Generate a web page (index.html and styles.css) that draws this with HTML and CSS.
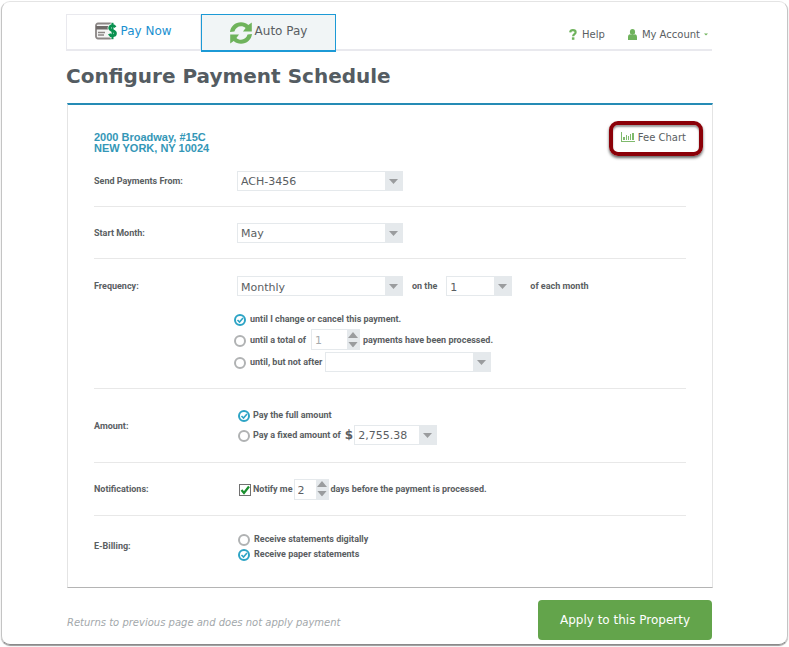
FILE: index.html
```html
<!DOCTYPE html>
<html lang="en">
<head>
  <meta charset="UTF-8">
  <meta name="viewport" content="width=device-width, initial-scale=1.0">
  <title>Configure Payment Schedule</title>
  <link rel="stylesheet" href="styles.css">
</head>
<body>
  <div class="page">
    <header class="topbar">
      <nav class="tabs">
        <a href="#" class="tab">
          <svg width="22" height="18" viewBox="0 0 22 18">
            <rect x="1" y="1.5" width="16" height="15" rx="2" fill="#f4f4f4" stroke="#8b8685" stroke-width="1.8"/>
            <rect x="1" y="4" width="15" height="3.5" fill="#6f6a69"/>
            <path d="M3 10.5h7M3 13h6" stroke="#8b8685" stroke-width="1.3"/>
            <path d="M20.3 5.200C19.500 3.900 18.600 3.600 17.500 3.600c-1.700 0-2.900.9-2.900 2.300 0 3.400 5.900 2 5.900 5.400 0 1.500-1.300 2.500-3.100 2.500-1.500 0-2.600-.6-3.200-1.900M17.500 1.300v15.200" fill="none" stroke="#fff" stroke-width="4"/>
            <path d="M20.3 5.200C19.500 3.900 18.600 3.600 17.500 3.600c-1.700 0-2.900.9-2.900 2.300 0 3.400 5.900 2 5.900 5.400 0 1.500-1.300 2.500-3.100 2.500-1.500 0-2.600-.6-3.200-1.900" fill="none" stroke="#0a9150" stroke-width="2.700"/>
            <path d="M17.500 .8v16.400" stroke="#0a9150" stroke-width="2"/>
          </svg>
          Pay Now
        </a>
        <a href="#" class="tab active">
          <svg width="22" height="22" viewBox="0 0 22 22" fill="#6fb35c">
            <path d="M0 10C.6 4.300 5.200.2 11 .2c2.900 0 5.300 1 7.300 2.700L21.800.6V9.500H13L15.600 6C14.300 4.800 12.800 4.200 11 4.200c-3.100 0-5.600 2-6.600 5.200z"/>
            <path d="M22 12c-.6 5.700-5.200 9.800-11 9.800-2.900 0-5.300-1-7.300-2.700L.2 21.400V12.500H9L6.400 16c1.300 1.200 2.800 1.800 4.600 1.800 3.100 0 5.600-2 6.600-5.200z"/>
          </svg>
          Auto Pay
        </a>
      </nav>
      <div class="links">
        <a href="#" class="link">
          <svg width="8" height="11" viewBox="0 0 8 11">
            <path d="M1.200 3.400C1.400 1.800 2.400 1.200 3.900 1.200c1.600 0 2.700.7 2.700 2 0 1.900-2.500 1.800-2.500 4" fill="none" stroke="#6fb35c" stroke-width="2.200"/>
            <rect x="2.900" y="8.300" width="2.500" height="2.500" fill="#6fb35c"/>
          </svg>
          Help
        </a>
        <a href="#" class="link">
          <svg width="9" height="11" viewBox="0 0 9 11" fill="#6fb35c">
            <ellipse cx="4.500" cy="3" rx="2.600" ry="3"/>
            <path d="M0 11V8.200C0 6.400 .8 5.300 2.200 5.200c1.300 1.200 3.300 1.200 4.600 0C8.200 5.300 9 6.400 9 8.200V11z"/>
          </svg>
          My Account
          <svg class="caret" width="4" height="3" viewBox="0 0 4 3"><path d="M0 .5h4L2 2.500z" fill="#6fb35c"/></svg>
        </a>
      </div>
    </header>

    <h1>Configure Payment Schedule</h1>

    <form id="scheduleForm">
      <div class="card">
        <div class="card-head">
          <p class="address">2000 Broadway, #15C<br>NEW YORK, NY 10024</p>
          <a href="#" class="fee-chart">
            <svg width="14" height="11" viewBox="0 0 14 11" fill="#7fba6d">
              <path d="M0 0h1v9h13v1H0z"/>
              <path d="M2 5h2v3H2zM5 3h1v5H5zM7 4h1v4H7zM9 2h1v6H9zM11 1h2v7h-2z"/>
            </svg>
            Fee Chart
          </a>
        </div>

        <div class="row">
          <label class="name" for="account">Send Payments From:</label>
          <select id="account" class="wide"><option>ACH-3456</option></select>
        </div>

        <div class="row">
          <label class="name" for="month">Start Month:</label>
          <select id="month" class="wide"><option>May</option></select>
        </div>

        <div class="row frequency">
          <label class="name" for="frequency">Frequency:</label>
          <div class="fields">
            <div class="line">
              <select id="frequency" class="wide"><option>Monthly</option></select>
              <label class="on-the" for="day">on the</label>
              <select id="day" class="day"><option>1</option></select>
              <span class="each">of each month</span>
            </div>
            <div class="choices">
              <div class="line">
                <input type="radio" name="until" id="untilCancel" checked>
                <label for="untilCancel">until I change or cancel this payment.</label>
              </div>
              <div class="line">
                <input type="radio" name="until" id="untilTotal">
                <label for="untilTotal">until a total of</label>
                <span class="spinner total">
                  <input type="text" value="1" aria-label="Number of payments">
                  <span class="steps">
                    <button type="button" class="up" aria-label="More payments"></button>
                    <button type="button" class="down" aria-label="Fewer payments"></button>
                  </span>
                </span>
                <span>payments have been processed.</span>
              </div>
              <div class="line">
                <input type="radio" name="until" id="untilDate">
                <label for="untilDate">until, but not after</label>
                <select class="wide" aria-label="End date"><option></option></select>
              </div>
            </div>
          </div>
        </div>

        <div class="row amount">
          <span class="name">Amount:</span>
          <div class="fields">
            <div class="line">
              <input type="radio" name="amount" id="fullAmount" checked>
              <label for="fullAmount">Pay the full amount</label>
            </div>
            <div class="line">
              <input type="radio" name="amount" id="fixedAmount">
              <label for="fixedAmount">Pay a fixed amount of</label>
              <span class="dollar">$</span>
              <select class="sum" aria-label="Fixed amount"><option>2,755.38</option></select>
            </div>
          </div>
        </div>

        <div class="row notifications">
          <span class="name">Notifications:</span>
          <div class="fields line">
            <input type="checkbox" id="notify" checked>
            <label for="notify">Notify me</label>
            <span class="spinner">
              <input type="text" value="2" aria-label="Days before payment">
              <span class="steps">
                <button type="button" class="up" aria-label="More days"></button>
                <button type="button" class="down" aria-label="Fewer days"></button>
              </span>
            </span>
            <span>days before the payment is processed.</span>
          </div>
        </div>

        <div class="row billing">
          <span class="name">E-Billing:</span>
          <div class="fields">
            <div class="line">
              <input type="radio" name="billing" id="digital">
              <label for="digital">Receive statements digitally</label>
            </div>
            <div class="line">
              <input type="radio" name="billing" id="paper" checked>
              <label for="paper">Receive paper statements</label>
            </div>
          </div>
        </div>
      </div>

      <div class="actions">
        <p class="note">Returns to previous page and does not apply payment</p>
        <button type="submit" class="apply">Apply to this Property</button>
      </div>
    </form>
  </div>
</body>
</html>
```

FILE: styles.css
```css
* {
  box-sizing: border-box;
}
body {
  margin: 0;
  font-family: "DejaVu Sans", Verdana, sans-serif;
  color: #5a5e62;
  background-color: white;
}
a {
  color: inherit;
  text-decoration: none;
}
svg {
  flex: none;
}
.page {
  margin: 1px 1px 3px;
  padding: 12px 75px 4px 64px;
  border: 1px solid #c4c4c4;
  border-top-color: #e4e4e4;
  border-bottom-color: #8a8a8a;
  border-radius: 9px;
  box-shadow: 0 1px 1px rgba(0, 0, 0, 0.4);
}

/* top bar */
.topbar {
  display: flex;
  justify-content: space-between;
  height: 37px;
  border-bottom: 2px solid #e9e9ee;
}
.tabs {
  display: flex;
}
.tab {
  display: flex;
  align-items: center;
  justify-content: center;
  gap: 3px;
  width: 135px;
  height: 35px;
  padding-bottom: 2px;
  font-size: 12px;
  color: #1b90d0;
  border: 1px solid #e9e9ee;
  border-bottom: 0;
}
.tab.active {
  height: 38px;
  padding-bottom: 3px;
  color: #5a5e62;
  background-color: #f1f5f6;
  border: 1px solid #1c9ad6;
  border-bottom-width: 2px;
}
.tab.active svg {
  margin-top: 3px;
}
.links {
  display: flex;
  align-items: center;
  gap: 23px;
  padding: 6px 4px 0 0;
}
.link {
  display: flex;
  align-items: center;
  gap: 5px;
  font-size: 10px;
}
.caret {
  margin-left: -1px;
}

h1 {
  margin: 13px 0 14px;
  font-size: 20px;
  line-height: 25px;
  color: #545c62;
}

/* card */
.card {
  margin-right: -1px;
  margin-left: 1px;
  padding: 0 26px;
  border: 1px solid #e4e4e4;
  border-top: 2px solid #258bb5;
  border-bottom-color: #b4b4b4;
}
.card-head {
  display: flex;
  justify-content: space-between;
  height: 50px;
  margin-right: -17px;
  padding-top: 16px;
}
.address {
  margin: 11px 0 0;
  font: bold 11px/11px "Liberation Sans", Arial, sans-serif;
  color: #3497b7;
}
.fee-chart {
  display: flex;
  align-items: center;
  gap: 3px;
  height: 35px;
  padding: 0 13px 2px 8px;
  font-size: 10px;
  border: 4px solid #8b0008;
  border-radius: 9px;
  box-shadow: 0 2px 3px rgba(0, 0, 0, 0.6), inset 0 2px 2px rgba(0, 0, 0, 0.4);
}
.row {
  display: flex;
  align-items: center;
  min-height: 52px;
  font: bold 9px/12px Roboto, Arial, sans-serif;
  border-bottom: 1px solid #e8e8e8;
}
.name {
  flex: none;
  width: 143px;
}
.line {
  display: flex;
  align-items: center;
}
.line label {
  white-space: nowrap;
}
.frequency {
  align-items: flex-start;
  padding: 17px 0 16px;
}
.frequency > .name {
  padding-top: 4px;
}
.on-the {
  margin: 0 9px;
}
.each {
  margin-left: 18px;
}
.choices {
  margin: 16px 0 0 -3px;
}
.choices .line:nth-child(2) {
  margin: 3px 0 2px;
}
.choices .wide {
  margin-left: 3px;
}
.amount {
  height: 74px;
  padding-top: 1px;
}
.amount .line:first-child {
  margin-bottom: 3px;
}
.amount .fields,
.billing .fields {
  padding-left: 1px;
}
.notifications {
  height: 53px;
}
.billing {
  height: 71px;
  padding-bottom: 11px;
  border-bottom: 0;
}
.billing .line:first-child {
  margin-bottom: 1px;
}
.billing label {
  padding-left: 1px;
}
.dollar {
  margin: 0 1px 0 4px;
  font: bold 12px/14px "DejaVu Sans", Verdana, sans-serif;
}

/* form controls */
select {
  height: 20px;
  padding: 2px 22px 0 3px;
  font: 11px "DejaVu Sans", Verdana, sans-serif;
  color: #5a5e62;
  background: white url("data:image/svg+xml,%3Csvg xmlns='http://www.w3.org/2000/svg' width='18' height='20'%3E%3Cpath fill='%23e5e9ec' d='M0 0h18v20H0z'/%3E%3Cpath fill='%239a9c9e' d='M4 8h9l-4.500 5z'/%3E%3C/svg%3E") no-repeat right center;
  background-origin: border-box;
  border: 1px solid #e5e9ec;
  border-radius: 0;
  appearance: none;
}
.wide {
  width: 166px;
}
.day {
  width: 66px;
}
.sum {
  width: 83px;
}
input[type="radio"] {
  flex: none;
  width: 12px;
  height: 12px;
  margin: 2px 3px 0 0;
  background: white;
  border: 2px solid #b0b2b3;
  border-radius: 50%;
  appearance: none;
}
.choices input[type="radio"] {
  margin-right: 4px;
}
input[type="radio"]:checked {
  border-color: #2da4c5;
  background: url("data:image/svg+xml,%3Csvg xmlns='http://www.w3.org/2000/svg' width='8' height='8'%3E%3Cpath fill='none' stroke='%232da4c5' stroke-width='1.600' d='M1.500 4l2 2 3.500-4'/%3E%3C/svg%3E") center no-repeat;
}
input[type="checkbox"] {
  width: 12px;
  height: 12px;
  margin: 2px 2px 0;
  background: url("data:image/svg+xml,%3Csvg xmlns='http://www.w3.org/2000/svg' width='10' height='10'%3E%3Cpath fill='none' stroke='%231a8f2e' stroke-width='2.200' d='M1.500 5l2.500 3 5-6.500'/%3E%3C/svg%3E") center no-repeat;
  border: 1px solid #707070;
  appearance: none;
}
.spinner {
  display: flex;
  width: 35px;
  height: 21px;
  margin: 0 2px 0 1px;
  border: 1px solid #e5e9ec;
}
.spinner.total {
  width: 49px;
  margin: 0 3px 0 5px;
}
.spinner input {
  flex: 1;
  min-width: 0;
  padding: 2px 0 0 3px;
  font: 11px "DejaVu Sans", Verdana, sans-serif;
  color: #5a5e62;
  border: 0;
}
.spinner.total input {
  color: #a8abad;
}
.steps {
  display: flex;
  flex-direction: column;
  width: 12px;
  background-color: #e5e9ec;
}
.steps button {
  flex: 1;
  padding: 0;
  border: 0;
  background: url("data:image/svg+xml,%3Csvg xmlns='http://www.w3.org/2000/svg' width='10' height='6'%3E%3Cpath fill='%239a9c9e' d='M0 6h10L5 0z'/%3E%3C/svg%3E") center no-repeat;
}
.steps .down {
  transform: rotate(180deg);
}

/* footer */
.actions {
  display: flex;
  align-items: center;
  justify-content: space-between;
  margin: 12px 0 0 1px;
}
.note {
  margin: 4px 0 0;
  font-size: 10px;
  font-style: italic;
  color: #a3a8ab;
}
.apply {
  width: 174px;
  height: 40px;
  font: 12px "DejaVu Sans", Verdana, sans-serif;
  color: white;
  background-color: #63a44b;
  border: 0;
  border-radius: 4px;
  cursor: pointer;
}
.apply:hover {
  background-color: #56913f;
}
```
